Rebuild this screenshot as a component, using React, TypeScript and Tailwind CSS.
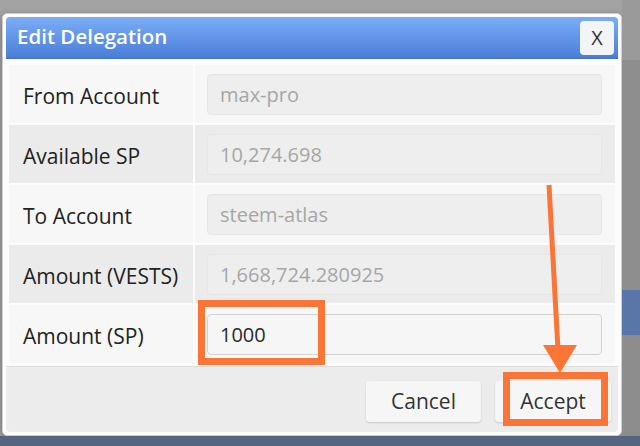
import React from "react";

const rows: { label: string; value: string; editable?: boolean }[] = [
  { label: "From Account", value: "max-pro" },
  { label: "Available SP", value: "10,274.698" },
  { label: "To Account", value: "steem-atlas" },
  { label: "Amount (VESTS)", value: "1,668,724.280925" },
  { label: "Amount (SP)", value: "1000", editable: true },
];

export default function App() {
  return (
    <div
      className="relative w-[640px] h-[446px] overflow-hidden bg-[#a3a3a3] flex flex-col"
      style={{ fontFamily: '"Open Sans", "Noto Sans", sans-serif' }}
    >
      <div className="flex flex-1">
        <div className="pl-[2px] pt-[13px]">
          <div className="w-[620px] h-[423px] bg-[#fcfcfc] border border-[#cfcfcf] rounded-[5px] flex flex-col p-[3px] shadow-[0_2px_6px_rgba(0,0,0,0.35)]">
            {/* Title bar */}
            <div className="h-[42px] rounded-t-[4px] bg-gradient-to-b from-[#7badf6] to-[#4a7ed7] border-b border-[#3f70c6] flex items-center justify-between pl-[11px] pr-[4px]">
              <span className="text-white text-[20.5px] font-semibold pb-[3px]">Edit Delegation</span>
              <div className="w-[34px] h-[34px] rounded-[4px] bg-[#f3f4f6] flex items-center justify-center text-[#333] text-[20px]">
                X
              </div>
            </div>
            {/* Body */}
            <div className="flex flex-col gap-[2px] px-[3px] pt-[6px] pb-[2px]">
              {rows.map((r, i) => (
                <div key={r.label} className="flex h-[58px] gap-[2px]">
                  <div
                    className={`w-[184px] flex items-center pl-[14px] pt-[5px] text-[21px] text-[#222] ${
                      i % 2 === 0 ? "bg-[#f7f7f7]" : "bg-[#ebebeb]"
                    }`}
                  >
                    {r.label}
                  </div>
                  <div
                    className={`flex-1 flex items-center pl-[12px] pr-[13px] ${
                      i % 2 === 0 ? "bg-[#f7f7f7]" : "bg-[#ebebeb]"
                    }`}
                  >
                    <div
                      className={`w-full h-[41px] rounded-[4px] flex items-center pl-[12px] pt-[2px] text-[20px] ${
                        r.editable
                          ? "bg-[#f6f6f6] border border-[#d2d2d2] text-[#2a2a2a]"
                          : "bg-[#eeeeee] border border-[#e6e6e6] text-[#a6a6a6]"
                      }`}
                    >
                      {r.value}
                    </div>
                  </div>
                </div>
              ))}
            </div>
            {/* Footer */}
            <div className="flex-1 mt-[1px] bg-[#ececec] border-t border-[#dcdcdc] rounded-b-[4px] flex items-center justify-end gap-[14px] pr-[7px] pt-[4px]">
              <div className="w-[115px] h-[41px] rounded-[4px] bg-[#f6f6f6] shadow-[0_1px_2px_rgba(0,0,0,0.15)] flex items-center justify-center text-[21px] text-[#333]">
                Cancel
              </div>
              <div className="w-[116px] h-[41px] rounded-[4px] bg-[#f6f6f6] shadow-[0_1px_2px_rgba(0,0,0,0.15)] flex items-center justify-center text-[21px] text-[#333]">
                Accept
              </div>
            </div>
          </div>
        </div>
        <div className="flex-1 flex flex-col">
          <div className="h-[60px] bg-[#9a9a9a]" />
          <div className="h-[230px] bg-[#8e8e8e]" />
          <div className="h-[45px] bg-[#5a76a8]" />
          <div className="flex-1 bg-[#8d8d8d]" />
        </div>
      </div>
      <div className="h-[10px] bg-[#56657f]" />

      {/* Annotations */}
      <div className="absolute left-[198px] top-[300px] w-[127px] h-[65px] border-[7px] border-[#fb7536]" />
      <div className="absolute left-[503px] top-[372px] w-[105px] h-[54px] border-[7px] border-[#fb7536]" />
      <svg className="absolute left-0 top-0" width="640" height="446" viewBox="0 0 640 446">
        <line x1="549" y1="185" x2="558" y2="350" stroke="#fb7536" strokeWidth="5" />
        <polygon points="543,345 577,345 560,373" fill="#fb7536" />
      </svg>
    </div>
  );
}
